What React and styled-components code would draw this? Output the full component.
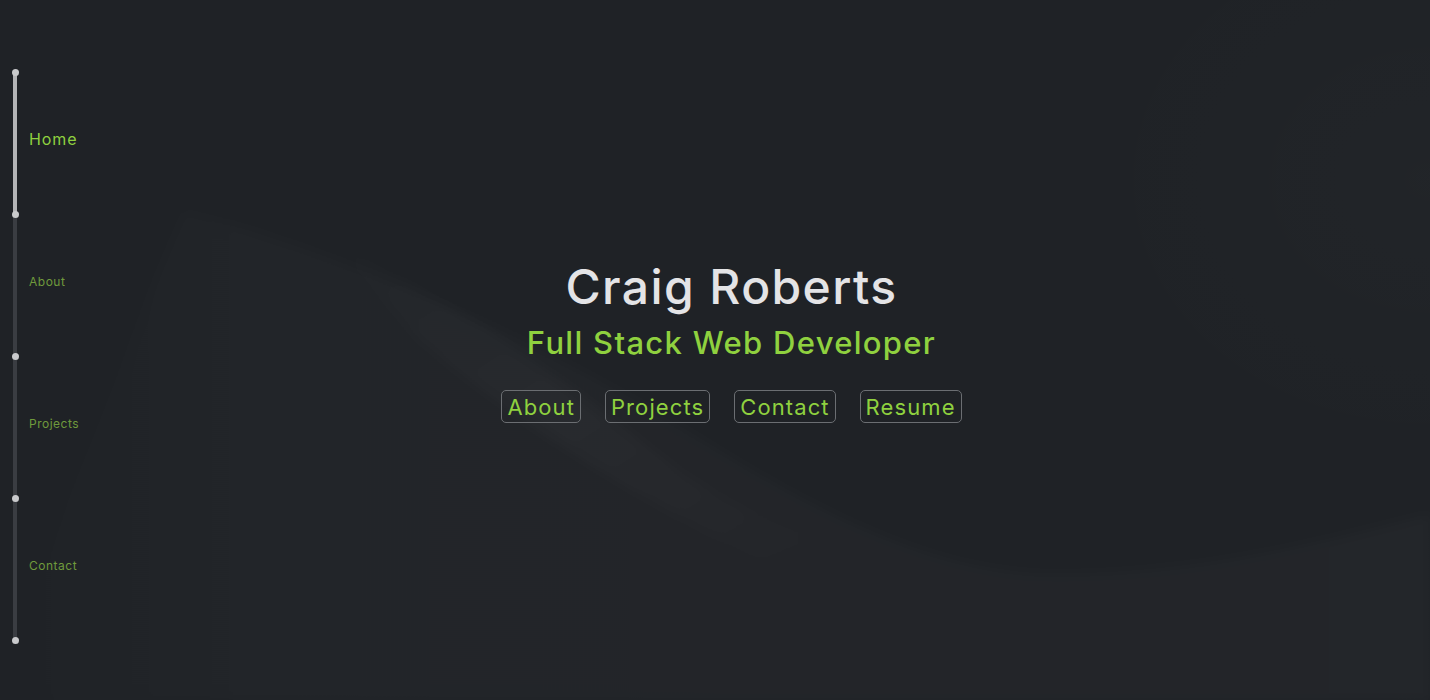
import React from "react";
import styled, { createGlobalStyle } from "styled-components";

const Global = createGlobalStyle`
  html, body { margin: 0; padding: 0; background: #1f2226; }
  body { font-family: Inter, "Noto Sans", sans-serif; }
  * { box-sizing: border-box; }
`;

const Page = styled.div`
  position: relative;
  width: 100%;
  height: 700px;
  overflow: hidden;
  background: #1f2226;
  display: flex;
`;

const Backdrop = styled.svg`
  position: absolute;
  inset: 0;
  width: 100%;
  height: 100%;
  pointer-events: none;
`;

const Sidebar = styled.nav`
  position: relative;
  z-index: 1;
  width: 33px;
  flex: none;
  padding-top: 72px;
  display: flex;
  flex-direction: column;
`;

const Segment = styled.div`
  position: relative;
  height: 142px;
  margin-left: 13px;
  width: 4px;
  border-radius: 2px;
  background: ${(p) => (p.$active ? "#b4b5b7" : "#3a3d42")};
`;

const Dot = styled.span`
  position: absolute;
  z-index: 2;
  left: -1.5px;
  ${(p) => (p.$top ? "top: -3.5px;" : "bottom: -3.5px;")}
  width: 7px;
  height: 7px;
  border-radius: 50%;
  background: #c9cacc;
`;

const NavLabel = styled.a`
  position: absolute;
  left: 16px;
  top: 50%;
  transform: translateY(calc(-50% - 4px));
  white-space: nowrap;
  font-family: Inter, sans-serif;
  font-size: ${(p) => (p.$active ? "16px" : "12px")};
  letter-spacing: ${(p) => (p.$active ? "0.9px" : "0.5px")};
  color: ${(p) => (p.$active ? "#8fd13f" : "#6f9a3c")};
  text-decoration: none;
`;

const Hero = styled.main`
  position: relative;
  z-index: 1;
  flex: 1;
  display: flex;
  flex-direction: column;
  align-items: center;
  padding-top: 257px;
`;

const Name = styled.h1`
  margin: 0;
  font-family: Inter, sans-serif;
  font-weight: 500;
  font-size: 48px;
  line-height: 60px;
  color: #e4e4e6;
  letter-spacing: 1.4px;
`;

const Title = styled.h2`
  margin: 6px 0 0;
  font-family: Inter, sans-serif;
  font-weight: 500;
  font-size: 31px;
  line-height: 40px;
  color: #8fd13f;
  letter-spacing: 1.3px;
`;

const Buttons = styled.div`
  margin-top: 27px;
  display: flex;
  gap: 24px;
`;

const Btn = styled.a`
  display: inline-flex;
  align-items: center;
  height: 33px;
  padding: 0 5px;
  border: 1px solid #6b6e72;
  border-radius: 5px;
  font-family: Inter, sans-serif;
  font-size: 22px;
  letter-spacing: 1.1px;
  color: #8fd13f;
  text-decoration: none;
`;

const sections = ["Home", "About", "Projects", "Contact"];

export default function App() {
  return (
    <>
      <Global />
      <Page>
        <Backdrop viewBox="0 0 1430 700" preserveAspectRatio="none">
          <defs>
            <linearGradient id="band" x1="0" y1="0" x2="1" y2="1">
              <stop offset="0" stopColor="#ffffff" stopOpacity="0" />
              <stop offset="0.5" stopColor="#ffffff" stopOpacity="0.025" />
              <stop offset="1" stopColor="#ffffff" stopOpacity="0" />
            </linearGradient>
            <linearGradient id="fade" x1="0" y1="0" x2="1" y2="0">
              <stop offset="0" stopColor="#ffffff" stopOpacity="0" />
              <stop offset="0.2" stopColor="#ffffff" stopOpacity="0.014" />
              <stop offset="1" stopColor="#ffffff" stopOpacity="0.018" />
            </linearGradient>
            <radialGradient id="glow" cx="1" cy="0.3" r="0.5">
              <stop offset="0" stopColor="#ffffff" stopOpacity="0.012" />
              <stop offset="1" stopColor="#ffffff" stopOpacity="0" />
            </radialGradient>
            <filter id="soft" x="-10%" y="-10%" width="120%" height="120%">
              <feGaussianBlur stdDeviation="6" />
            </filter>
          </defs>
          <rect x="700" y="0" width="730" height="600" fill="url(#glow)" />
          <path
            d="M185 212 C 330 250 520 330 700 440 C 820 515 930 570 1040 575 C 1200 578 1330 540 1430 515 L1430 700 L0 700 L0 640 C 70 520 130 330 185 212 Z"
            fill="url(#fade)"
            filter="url(#soft)"
          />
          <path
            d="M330 240 C 450 300 560 380 650 450 C 700 490 760 520 820 540 L 760 560 C 640 500 520 420 420 340 Z"
            fill="url(#band)"
            filter="url(#soft)"
          />
        </Backdrop>
        <Sidebar>
          {sections.map((s, i) => (
            <Segment key={s} $active={i === 0}>
              {i === 0 && <Dot $top />}
              <Dot />
              <NavLabel href={`#${s.toLowerCase()}`} $active={i === 0}>
                {s}
              </NavLabel>
            </Segment>
          ))}
        </Sidebar>
        <Hero>
          <Name>Craig Roberts</Name>
          <Title>Full Stack Web Developer</Title>
          <Buttons>
            <Btn href="#about">About</Btn>
            <Btn href="#projects">Projects</Btn>
            <Btn href="#contact">Contact</Btn>
            <Btn href="#resume">Resume</Btn>
          </Buttons>
        </Hero>
      </Page>
    </>
  );
}
